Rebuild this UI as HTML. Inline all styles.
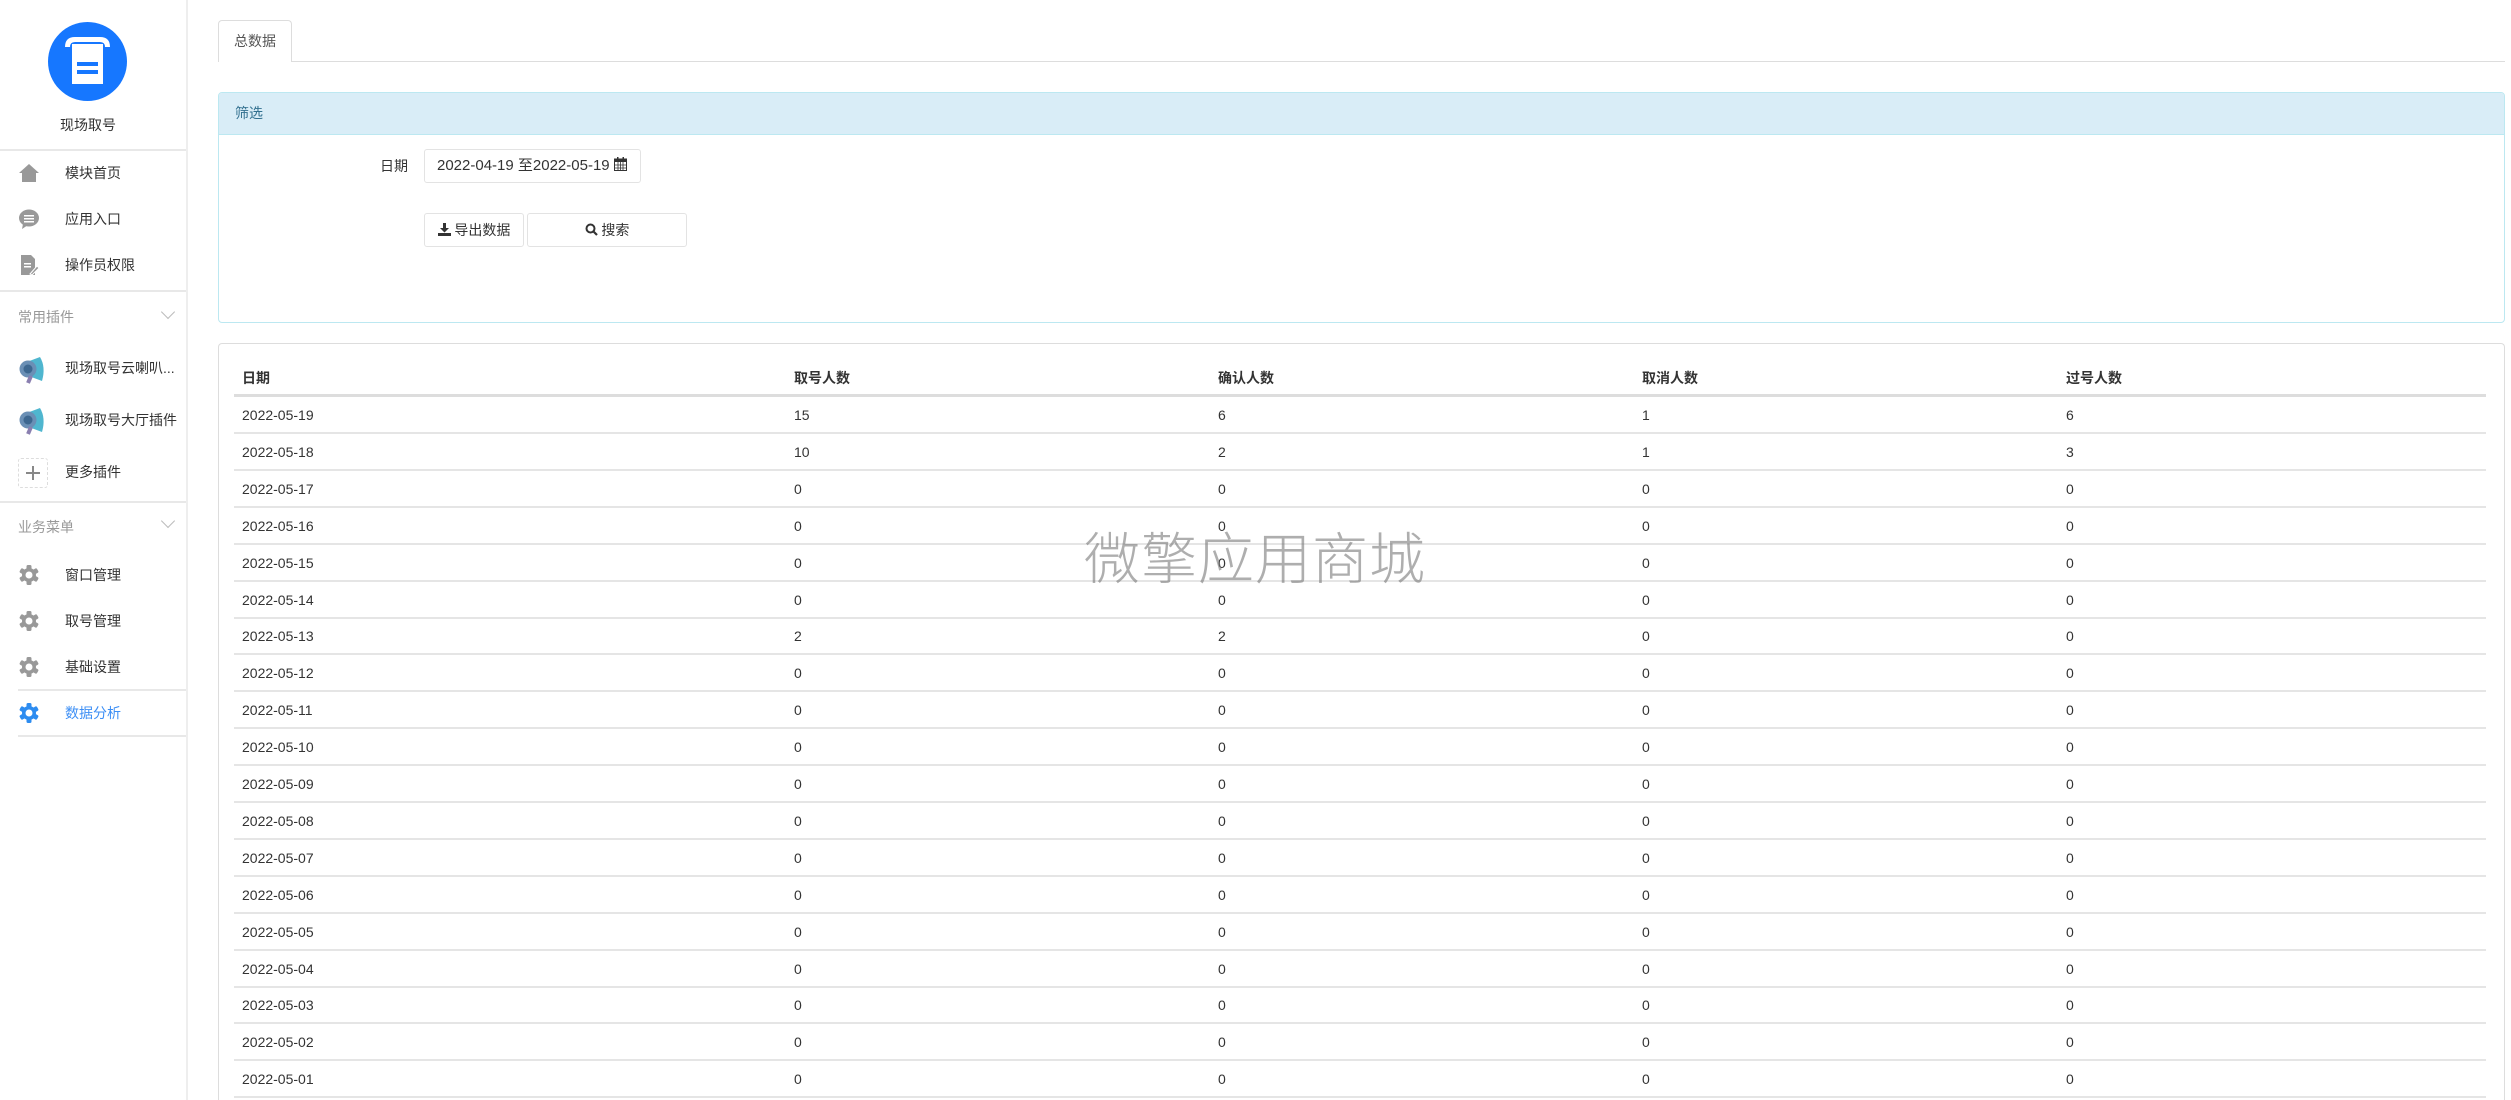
<!DOCTYPE html>
<html style="width:2511px;height:1100px;overflow:hidden"><head><meta charset="utf-8">
<style>
*{margin:0;padding:0;box-sizing:border-box}
body{width:2511px;height:1100px;overflow:hidden;background:#fff;font-family:"Liberation Sans","Noto Sans CJK SC",sans-serif;font-size:14px;color:#333;position:relative}
.a{position:absolute}
.hl{position:absolute;height:2px;background:#e8e8e8}
.mi{position:absolute;left:65px;font-size:14px;color:#333;transform:translateY(-50%);white-space:nowrap}
.ic{position:absolute;left:18px;transform:translateY(-50%)}
.sec{position:absolute;left:18px;color:#999;font-size:14px;transform:translateY(-50%)}
.chev{position:absolute;left:163px;width:10px;height:10px;border-right:1px solid #bbb;border-bottom:1px solid #bbb;transform:rotate(45deg)}
.row{position:absolute;left:234px;width:2252px;height:37px;border-bottom:2px solid #e5e5e5}
.row span{position:absolute;top:0;line-height:37px}
.btn{position:absolute;border:1px solid #e3e3e3;border-radius:3px;background:#fff;text-align:center;font-size:14px;color:#333}
</style></head><body>
<div class="a" style="left:186px;top:0;width:2px;height:1100px;background:#eee"></div>
<svg class="a" style="left:48px;top:22px" width="79" height="79" viewBox="0 0 79 79">
<circle cx="39.5" cy="39.5" r="39.5" fill="#1677ff"/>
<path d="M17 25 Q17 15 27 15 H52 Q62 15 62 25 H57 Q57 20 52 20 H27 Q22 20 22 25 Z" fill="#fff"/>
<rect x="24" y="22" width="31" height="40" fill="#fff"/>
<rect x="29" y="40" width="21" height="4" fill="#1677ff"/>
<rect x="29" y="48" width="21" height="4" fill="#1677ff"/>
</svg>
<div class="a" style="left:0;width:176px;top:115px;text-align:center;font-size:14px">现场取号</div>
<div class="hl" style="left:0;width:186px;top:149px"></div>
<svg class="ic" style="top:173px" width="22" height="22" viewBox="0 0 22 22"><path d="M11 2 L21 11 H18 V20 H4 V11 H1 Z" fill="#999"/></svg><div class="mi" style="top:173px">模块首页</div>
<svg class="ic" style="top:219px" width="22" height="22" viewBox="0 0 22 22"><ellipse cx="11" cy="10" rx="10" ry="8.5" fill="#999"/><path d="M5 16 L4 21 L10 17Z" fill="#999"/><rect x="6" y="7" width="10" height="1.5" fill="#fff"/><rect x="6" y="10" width="10" height="1.5" fill="#fff"/><rect x="6" y="13" width="10" height="1.5" fill="#fff"/></svg><div class="mi" style="top:219px">应用入口</div>
<svg class="ic" style="top:265px" width="22" height="22" viewBox="0 0 22 22"><path d="M3 1 H13 L17 5 V21 H3 Z" fill="#999"/><rect x="6" y="9" width="7" height="1.5" fill="#fff"/><rect x="6" y="12" width="7" height="1.5" fill="#fff"/><path d="M12 20 L19 12 L21 14 L14 21Z" fill="#999" stroke="#fff" stroke-width="1"/></svg><div class="mi" style="top:265px">操作员权限</div>
<div class="hl" style="left:0;width:186px;top:290px"></div>
<div class="sec" style="top:317px">常用插件</div><div class="chev" style="top:307px"></div>
<svg class="ic" style="top:370px" width="30" height="30" viewBox="0 0 30 30"><path d="M6 8 L22 2 Q28 12 24 26 L8 20Z" fill="#4fb6cf"/><circle cx="10" cy="14" r="8.5" fill="#6a8fb5"/><circle cx="10" cy="14" r="4.5" fill="#3d6790"/><path d="M13 21 L10 28" stroke="#8a7fb0" stroke-width="4"/></svg><div class="mi" style="top:368px">现场取号云喇叭...</div>
<svg class="ic" style="top:421px" width="30" height="30" viewBox="0 0 30 30"><path d="M6 8 L22 2 Q28 12 24 26 L8 20Z" fill="#4fb6cf"/><circle cx="10" cy="14" r="8.5" fill="#6a8fb5"/><circle cx="10" cy="14" r="4.5" fill="#3d6790"/><path d="M13 21 L10 28" stroke="#8a7fb0" stroke-width="4"/></svg><div class="mi" style="top:420px">现场取号大厅插件</div>
<div class="a" style="left:18px;top:458px;width:30px;height:30px;border:1px dashed #ddd;border-radius:3px"></div>
<div class="a" style="left:26px;top:472px;width:14px;height:1.5px;background:#888"></div><div class="a" style="left:32.3px;top:466px;width:1.5px;height:14px;background:#888"></div>
<div class="mi" style="top:472px">更多插件</div>
<div class="hl" style="left:0;width:186px;top:501px"></div>
<div class="sec" style="top:527px">业务菜单</div><div class="chev" style="top:516px"></div>
<svg width="0" height="0" style="position:absolute"><defs><g id="gear"><circle cx="11" cy="11" r="7" fill="currentColor"/><g fill="currentColor"><rect x="8.5" y="1" width="5" height="20" rx="1.5"/><rect x="8.5" y="1" width="5" height="20" rx="1.5" transform="rotate(60 11 11)"/><rect x="8.5" y="1" width="5" height="20" rx="1.5" transform="rotate(120 11 11)"/></g><circle cx="11" cy="11" r="3.5" fill="#fff"/></g></defs></svg>
<svg class="ic" style="top:575px;color:#999" width="22" height="22"><use href="#gear"/></svg><div class="mi" style="top:575px">窗口管理</div>
<svg class="ic" style="top:621px;color:#999" width="22" height="22"><use href="#gear"/></svg><div class="mi" style="top:621px">取号管理</div>
<svg class="ic" style="top:667px;color:#999" width="22" height="22"><use href="#gear"/></svg><div class="mi" style="top:667px">基础设置</div>
<div class="hl" style="left:18px;width:168px;top:689px"></div>
<svg class="ic" style="top:713px;color:#2d8cf0" width="22" height="22"><use href="#gear"/></svg><div class="mi" style="top:713px;color:#3d8ff5">数据分析</div>
<div class="hl" style="left:18px;width:168px;top:735px"></div>
<div class="a" style="left:218px;top:61px;width:2287px;height:1px;background:#ddd"></div>
<div class="a" style="left:218px;top:20px;width:74px;height:42px;border:1px solid #ddd;border-bottom:none;border-radius:4px 4px 0 0;background:#fff;line-height:40px;text-align:center;font-size:14px;color:#555">总数据</div>
<div class="a" style="left:218px;top:92px;width:2287px;height:231px;border:1px solid #bce8f1;border-radius:4px;overflow:hidden">
<div style="height:42px;background:#d9edf7;border-bottom:1px solid #bce8f1;color:#31708f;line-height:41px;padding-left:16px;font-size:14px">筛选</div>
</div>
<div class="a" style="left:380px;top:156px;font-size:14px">日期</div>
<div class="btn" style="left:424px;top:149px;width:217px;height:34px;line-height:32px;text-align:left;padding-left:12px;font-size:15px">2022-04-19 至2022-05-19 <svg width="13" height="14" viewBox="0 0 13 14" style="vertical-align:-1px"><rect x="0.5" y="2" width="12" height="11.5" fill="none" stroke="#333"/><rect x="0.5" y="2" width="12" height="3" fill="#333"/><rect x="3" y="0" width="1.5" height="3" fill="#333"/><rect x="8.5" y="0" width="1.5" height="3" fill="#333"/><path d="M1 8H12M1 11H12M4 5V13M6.5 5V13M9 5V13" stroke="#333" stroke-width=".8"/></svg></div>
<div class="btn" style="left:424px;top:213px;width:100px;height:34px;line-height:32px"><svg width="13" height="13" viewBox="0 0 13 13" style="vertical-align:-1px"><path d="M5 0H8V5H11L6.5 9.5L2 5H5Z" fill="#333"/><rect x="0" y="10" width="13" height="3" fill="#333"/></svg> 导出数据</div>
<div class="btn" style="left:527px;top:213px;width:160px;height:34px;line-height:32px"><svg width="13" height="13" viewBox="0 0 13 13" style="vertical-align:-1px"><circle cx="5.5" cy="5.5" r="4" fill="none" stroke="#333" stroke-width="2"/><path d="M8.5 8.5L12 12" stroke="#333" stroke-width="2.2"/></svg> 搜索</div>
<div class="a" style="left:218px;top:343px;width:2287px;height:757px;border:1px solid #ddd;border-bottom:none;border-radius:4px 4px 0 0"></div>
<div class="a" style="left:234px;top:357px;width:2252px;height:40px;border-bottom:3px solid #ddd;font-weight:bold;font-size:14px">
<span class="a" style="left:8px;top:11px">日期</span><span class="a" style="left:560px;top:11px">取号人数</span><span class="a" style="left:984px;top:11px">确认人数</span><span class="a" style="left:1408px;top:11px">取消人数</span><span class="a" style="left:1832px;top:11px">过号人数</span></div>
<div id="rows"></div>
<script>
var d=[[19,15,6,1,6],[18,10,2,1,3],[17,0,0,0,0],[16,0,0,0,0],[15,0,0,0,0],[14,0,0,0,0],[13,2,2,0,0],[12,0,0,0,0],[11,0,0,0,0],[10,0,0,0,0],[9,0,0,0,0],[8,0,0,0,0],[7,0,0,0,0],[6,0,0,0,0],[5,0,0,0,0],[4,0,0,0,0],[3,0,0,0,0],[2,0,0,0,0],[1,0,0,0,0]];
var h='';d.forEach(function(r,i){var t=397+i*36.9;h+='<div class="row" style="top:'+t+'px;height:37px"><span style="left:8px">2022-05-'+(r[0]<10?'0':'')+r[0]+'</span><span style="left:560px">'+r[1]+'</span><span style="left:984px">'+r[2]+'</span><span style="left:1408px">'+r[3]+'</span><span style="left:1832px">'+r[4]+'</span></div>';});
document.getElementById('rows').innerHTML=h;
</script>
<div class="a" style="left:1084px;top:515px;font-size:56px;color:rgba(120,120,120,.6);letter-spacing:1px;font-family:'Noto Sans CJK SC',sans-serif;font-weight:300">微擎应用商城</div>
</body></html>
